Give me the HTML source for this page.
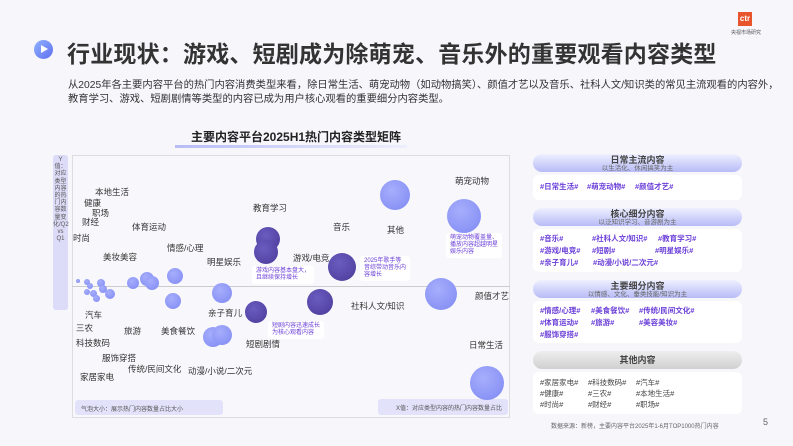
<!DOCTYPE html>
<html><head><meta charset="utf-8"><style>
*{margin:0;padding:0;box-sizing:border-box}
body{width:793px;height:446px;overflow:hidden;background:#f6f6fb;font-family:"Liberation Sans","Noto Sans CJK SC",sans-serif;position:relative;color:#333}
.a{position:absolute;white-space:nowrap}
.l{position:absolute;font-size:8.5px;color:#333;white-space:nowrap}
.b{position:absolute;border-radius:50%}
.lt{background:radial-gradient(circle at 40% 35%,#a6aefc,#7f89f2)}
.dk{background:radial-gradient(circle at 40% 35%,#6a5cc0,#4a3a98)}
.hd{position:absolute;left:533px;width:209px;height:18px;border-radius:9px;background:linear-gradient(#eef0ff,#b7bbf6);text-align:center;font-size:9px;font-weight:bold;color:#444;line-height:10px;padding-top:1px}
.hd span{display:block;font-size:6.5px;font-weight:normal;color:#666;line-height:7px}
.bx{position:absolute;left:533px;width:209px;background:#fff;border-radius:6px;padding:4px 7px;font-size:7.5px;color:#6b3fd8;font-weight:bold;line-height:12px}
.bx div{display:flex}
.bx div span{display:inline-block}
.nt{position:absolute;background:#fff;border-radius:3px;font-size:6px;color:#6b3fd8;line-height:7px;padding:2px 4px}
</style></head><body>
<!-- logo -->
<div class="a" style="left:738px;top:12px;width:14px;height:14px;background:#e8552c;color:#fff;font-size:8px;font-weight:bold;text-align:center;line-height:14px">ctr</div>
<div class="a" style="left:731px;top:29px;font-size:5px;color:#555">央视市场研究</div>
<!-- title -->
<div class="a" style="left:34px;top:40px;width:19px;height:19px;border-radius:50%;background:linear-gradient(135deg,#8fb2ff,#5f6ff0)"></div>
<div class="a" style="left:41px;top:45px;width:0;height:0;border-left:7px solid #fff;border-top:4.5px solid transparent;border-bottom:4.5px solid transparent"></div>
<div class="a" style="left:67px;top:35px;font-size:23px;font-weight:bold;color:#333;letter-spacing:0.2px">行业现状：游戏、短剧成为除萌宠、音乐外的重要观看内容类型</div>
<div class="a" style="left:68px;top:79px;font-size:10.3px;line-height:13.5px;color:#333">从2025年各主要内容平台的热门内容消费类型来看，除日常生活、萌宠动物（如动物搞笑）、颜值才艺以及音乐、社科人文/知识类的常见主流观看的内容外，<br>教育学习、游戏、短剧剧情等类型的内容已成为用户核心观看的重要细分内容类型。</div>
<div class="a" style="left:191px;top:128px;font-size:12px;font-weight:bold;color:#222">主要内容平台2025H1热门内容类型矩阵</div>
<div class="a" style="left:175px;top:145px;width:232px;height:3px;background:linear-gradient(90deg,#b8bcf5,#eeeffc)"></div>
<!-- chart -->
<div class="a" style="left:72px;top:155px;width:438px;height:263px;border:1px solid #ddd;background:#f8f8fc"></div>
<div class="a" style="left:72px;top:286px;width:438px;height:1px;background:#ccc"></div>
<div class="a" style="left:53px;top:155px;width:15px;height:155px;border-radius:3px;background:#dcdcf8;font-size:6px;color:#555;text-align:center;line-height:7.2px;white-space:normal;padding-top:2px">Y值：对应类型内容的热门内容数量变化/Q2 vs Q1</div>
<div class="a" style="left:75px;top:400px;width:148px;height:15px;border-radius:3px;background:#e2e2fb;font-size:6px;color:#555;padding:4px 6px">气泡大小：展示热门内容数量占比大小</div>
<div class="a" style="left:378px;top:399px;width:130px;height:16px;border-radius:3px;background:#e2e2fb;font-size:6px;color:#555;padding:4px 6px;text-align:right">X值：对应类型内容的热门内容数量占比</div>
<div class="b lt" style="left:76px;top:279px;width:4px;height:4px"></div>
<div class="b lt" style="left:84px;top:279px;width:6px;height:6px"></div>
<div class="b lt" style="left:87px;top:283px;width:6px;height:6px"></div>
<div class="b lt" style="left:84px;top:289px;width:6px;height:6px"></div>
<div class="b lt" style="left:90px;top:290px;width:7px;height:7px"></div>
<div class="b lt" style="left:93px;top:295px;width:7px;height:7px"></div>
<div class="b lt" style="left:97px;top:279px;width:8px;height:8px"></div>
<div class="b lt" style="left:99px;top:285px;width:8px;height:8px"></div>
<div class="b lt" style="left:105px;top:289px;width:10px;height:10px"></div>
<div class="b lt" style="left:127px;top:277px;width:12px;height:12px"></div>
<div class="b lt" style="left:140px;top:272px;width:14px;height:14px"></div>
<div class="b lt" style="left:145px;top:276px;width:14px;height:14px"></div>
<div class="b lt" style="left:167px;top:268px;width:16px;height:16px"></div>
<div class="b lt" style="left:165px;top:293px;width:16px;height:16px"></div>
<div class="b lt" style="left:212px;top:283px;width:20px;height:20px"></div>
<div class="b lt" style="left:203px;top:327px;width:20px;height:20px"></div>
<div class="b lt" style="left:212px;top:325px;width:20px;height:20px"></div>
<div class="b dk" style="left:256px;top:227px;width:24px;height:24px"></div>
<div class="b dk" style="left:254px;top:240px;width:24px;height:24px"></div>
<div class="b dk" style="left:245px;top:301px;width:22px;height:22px"></div>
<div class="b dk" style="left:328px;top:253px;width:28px;height:28px"></div>
<div class="b dk" style="left:307px;top:289px;width:26px;height:26px"></div>
<div class="b lt" style="left:380px;top:180px;width:30px;height:30px"></div>
<div class="b lt" style="left:447px;top:199px;width:34px;height:34px"></div>
<div class="b lt" style="left:425px;top:278px;width:32px;height:32px"></div>
<div class="b lt" style="left:470px;top:366px;width:34px;height:34px"></div>
<div class="l" style="left:95px;top:186px">本地生活</div>
<div class="l" style="left:84px;top:197px">健康</div>
<div class="l" style="left:92px;top:207px">职场</div>
<div class="l" style="left:82px;top:216px">财经</div>
<div class="l" style="left:73px;top:232px">时尚</div>
<div class="l" style="left:132px;top:221px">体育运动</div>
<div class="l" style="left:103px;top:251px">美妆美容</div>
<div class="l" style="left:167px;top:242px">情感/心理</div>
<div class="l" style="left:207px;top:256px">明星娱乐</div>
<div class="l" style="left:253px;top:202px">教育学习</div>
<div class="l" style="left:293px;top:252px">游戏/电竞</div>
<div class="l" style="left:333px;top:221px">音乐</div>
<div class="l" style="left:387px;top:224px">其他</div>
<div class="l" style="left:455px;top:175px">萌宠动物</div>
<div class="l" style="left:475px;top:290px">颜值才艺</div>
<div class="l" style="left:351px;top:300px">社科人文/知识</div>
<div class="l" style="left:85px;top:309px">汽车</div>
<div class="l" style="left:76px;top:322px">三农</div>
<div class="l" style="left:76px;top:337px">科技数码</div>
<div class="l" style="left:102px;top:352px">服饰穿搭</div>
<div class="l" style="left:80px;top:371px">家居家电</div>
<div class="l" style="left:124px;top:325px">旅游</div>
<div class="l" style="left:161px;top:325px">美食餐饮</div>
<div class="l" style="left:128px;top:363px">传统/民间文化</div>
<div class="l" style="left:208px;top:307px">亲子育儿</div>
<div class="l" style="left:246px;top:338px">短剧剧情</div>
<div class="l" style="left:188px;top:365px">动漫/小说/二次元</div>
<div class="l" style="left:469px;top:339px">日常生活</div>
<div class="nt" style="left:252px;top:266px">游戏内容基本盘大，<br>且继续保持增长</div>
<div class="nt" style="left:360px;top:256px">2025年歌手等<br>音综带动音乐内<br>容增长</div>
<div class="nt" style="left:446px;top:233px">萌宠动物覆盖量、<br>播放内容超越明星<br>娱乐内容</div>
<div class="nt" style="left:268px;top:321px">短剧内容迅速成长<br>为核心观看内容</div>
<!-- right panels -->
<div class="hd" style="top:154px">日常主流内容<span>以生活化、休闲搞笑为主</span></div>
<div class="bx" style="top:175px;height:25px;padding-top:6px"><div><span style="width:47px">#日常生活#</span><span style="width:48px">#萌宠动物#</span><span>#颜值才艺#</span></div></div>
<div class="hd" style="top:208px">核心细分内容<span>以泛知识学习、音游剧为主</span></div>
<div class="bx" style="top:229px;height:43px"><div><span style="width:52px">#音乐#</span><span style="width:66px">#社科人文/知识#</span><span>#教育学习#</span></div><div><span style="width:52px">#游戏/电竞#</span><span style="width:63px">#短剧#</span><span>#明星娱乐#</span></div><div><span style="width:53px">#亲子育儿#</span><span>#动漫/小说/二次元#</span></div></div>
<div class="hd" style="top:280px">主要细分内容<span>以情感、文化、垂类技能/知识为主</span></div>
<div class="bx" style="top:301px;height:42px"><div><span style="width:51px">#情感/心理#</span><span style="width:48px">#美食餐饮#</span><span>#传统/民间文化#</span></div><div><span style="width:51px">#体育运动#</span><span style="width:48px">#旅游#</span><span>#美容美妆#</span></div><div><span>#服饰穿搭#</span></div></div>
<div class="hd" style="top:351px;background:linear-gradient(#eee,#d0d0d0);line-height:16px">其他内容</div>
<div class="bx" style="top:372px;height:42px;color:#444;font-weight:normal;line-height:11px;padding-top:5px"><div><span style="width:48px">#家居家电#</span><span style="width:48px">#科技数码#</span><span>#汽车#</span></div><div><span style="width:48px">#健康#</span><span style="width:48px">#三农#</span><span>#本地生活#</span></div><div><span style="width:48px">#时尚#</span><span style="width:48px">#财经#</span><span>#职场#</span></div></div>
<div class="a" style="left:551px;top:421px;font-size:6px;color:#666">数据来源：新榜，主要内容平台2025年1-6月TOP1000热门内容</div>
<div class="a" style="left:763px;top:417px;font-size:9px;color:#666">5</div>
</body></html>
